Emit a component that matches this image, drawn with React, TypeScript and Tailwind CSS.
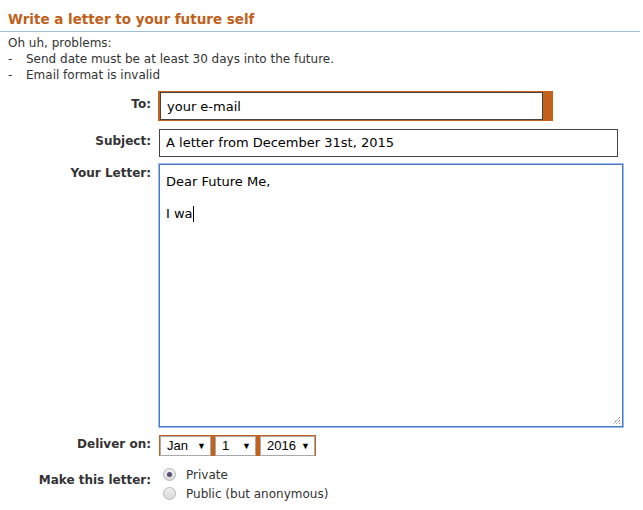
import React from "react";

const V = { fontFamily: '"DejaVu Sans", Verdana, sans-serif' };
const A = { fontFamily: '"Liberation Sans", Arial, sans-serif' };

function Label({ children, pt }: { children: React.ReactNode; pt: string }) {
  return (
    <div className={`w-[151px] shrink-0 text-right text-[12px] leading-[16px] font-bold text-[#333] ${pt}`}>
      {children}
    </div>
  );
}

function Select({ value, w }: { value: string; w: string }) {
  return (
    <div className={`${w} h-[20px] bg-white border border-[#a9a9a9] flex items-center justify-between pl-[6px] pr-[4px] text-[13px] text-black`} style={A}>
      <span>{value}</span>
      <span className="text-[9px] leading-none">▼</span>
    </div>
  );
}

function Radio({ checked, label }: { checked?: boolean; label: string }) {
  return (
    <div className="flex items-center h-[19px]">
      <span className="ml-[4px] w-[13px] h-[13px] rounded-full border border-[#b5b5b5] bg-gradient-to-b from-[#f0f0f0] to-[#d8d8d8] flex items-center justify-center">
        {checked && <span className="w-[5px] h-[5px] rounded-full bg-[#5a4a7a]" />}
      </span>
      <span className="ml-[10px] text-[12px] text-[#333]">{label}</span>
    </div>
  );
}

export default function App() {
  return (
    <div className="w-[643px] h-[510px] bg-white text-[#333]" style={V}>
      <div className="pl-[8px] pt-[11px] pb-[4px] text-[13.5px] leading-[16px] font-bold text-[#c0601a] border-b border-[#9cc0dc] mr-[3px]">
        Write a letter to your future self
      </div>
      <div className="mt-[3px] pl-[8px] text-[12px] leading-[16px] text-[#333]">
        <div>Oh uh, problems:</div>
        <div className="flex"><span className="w-[18px]">-</span><span>Send date must be at least 30 days into the future.</span></div>
        <div className="flex"><span className="w-[18px]">-</span><span>Email format is invalid</span></div>
      </div>

      <div className="mt-[8px] flex h-[30px]">
        <Label pt="pt-[5px]">To:</Label>
        <div className="ml-[7px] w-[395px] h-[30px] bg-[#c4621c] pl-[2px] pr-[10px] py-[1px]">
          <div className="h-full bg-white border border-[#444] pl-[6px] pt-px flex items-center text-[13px] text-black" style={V}>
            your e-mail
          </div>
        </div>
      </div>

      <div className="mt-[8px] flex h-[28px]">
        <Label pt="pt-[4px]">Subject:</Label>
        <div className="ml-[8px] w-[459px] h-[28px] bg-white border border-[#444] pl-[6px] flex items-center text-[13px] text-black">
          A letter from December 31st, 2015
        </div>
      </div>

      <div className="mt-[7px] flex h-[263px]">
        <Label pt="pt-[1px]">Your Letter:</Label>
        <div className="ml-[8px] w-[464px] h-[263px] relative bg-white border border-[#4d78c4] shadow-[0_0_0_1px_#9bbbee] pl-[6px] pt-[9px] text-[13px] leading-[16px] text-black">
          <div>Dear Future Me,</div>
          <div>&nbsp;</div>
          <div className="flex items-center">I wa<span className="inline-block w-px h-[16px] bg-black" /></div>
          <svg className="absolute right-[1px] bottom-[1px]" width="10" height="10" viewBox="0 0 10 10">
            <path d="M9 2 L2 9 M9 5 L5 9 M9 8 L8 9" stroke="#555" strokeWidth="1" strokeDasharray="1 1" />
          </svg>
        </div>
      </div>

      <div className="mt-[8px] flex h-[21px]">
        <Label pt="pt-[1px]">Deliver on:</Label>
        <div className="ml-[8px] bg-[#c4621c] p-px flex gap-[4px]">
          <Select value="Jan" w="w-[51px]" />
          <Select value="1" w="w-[41px]" />
          <Select value="2016" w="w-[55px]" />
        </div>
      </div>

      <div className="mt-[9px] flex">
        <Label pt="pt-[7px]">Make this letter:</Label>
        <div className="ml-[8px] flex flex-col">
          <Radio checked label="Private" />
          <Radio label="Public (but anonymous)" />
        </div>
      </div>
    </div>
  );
}
